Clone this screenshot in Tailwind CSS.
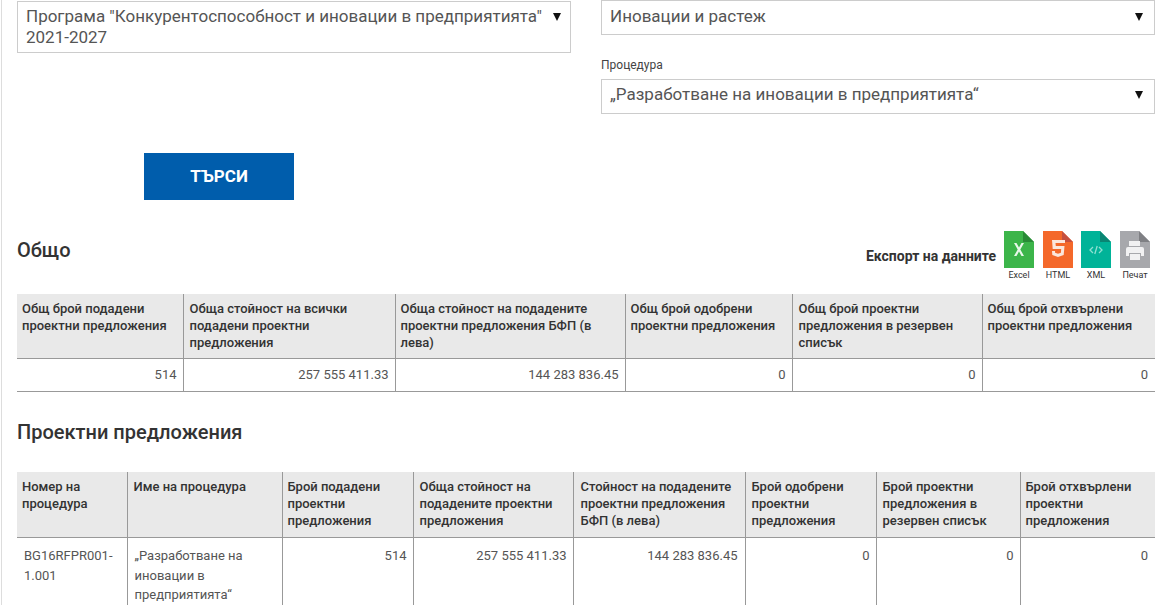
<!DOCTYPE html>
<html>
<head>
  <meta charset="utf-8">
  <title>Справка проектни предложения</title>
  <script src="https://cdn.jsdelivr.net/npm/@tailwindcss/browser@4"></script>
</head>
<body class="bg-white h-[605px] overflow-hidden font-['Roboto',sans-serif] text-[#555555]">
  <div class="ml-px h-[605px] border-l border-[#dddddd] pl-[15px] pr-[14px]">
    <!-- Filters -->
    <div class="flex h-[153px]">
      <div class="w-[554px] pt-px">
        <div class="relative h-[52px] border border-[#cccccc] pl-[8px] pr-[24px] pt-[4px] text-[17px] leading-[21px] text-[#555555]">
          Програма "Конкурентоспособност и иновации в предприятията" 2021-2027
          <svg class="absolute right-[9px] top-[11px] w-[8px] h-[8px]" viewBox="0 0 8 8"><polygon points="0,0 8,0 4,8" fill="#111111"/></svg>
        </div>
      </div>
      <div class="ml-[30px] w-[554px]">
        <div class="relative h-[35px] border border-[#cccccc] pl-[8px] pt-[5px] text-[17px] leading-[21px] text-[#555555]">
          Иновации и растеж
          <svg class="absolute right-[11px] top-[12px] w-[8px] h-[8px]" viewBox="0 0 8 8"><polygon points="0,0 8,0 4,8" fill="#111111"/></svg>
        </div>
        <div class="mt-[22px] h-[22px] text-[12px] leading-[16px] text-[#444444]">Процедура</div>
        <div class="relative h-[35px] border border-[#cccccc] pl-[8px] pt-[4px] text-[17px] leading-[21px] text-[#555555]">
          „Разработване на иновации в предприятията“
          <svg class="absolute right-[11px] top-[11px] w-[8px] h-[8px]" viewBox="0 0 8 8"><polygon points="0,0 8,0 4,8" fill="#111111"/></svg>
        </div>
      </div>
    </div>

    <button class="ml-[127px] block w-[150px] h-[47px] bg-[#005dac] text-white text-[17px] font-bold">ТЪРСИ</button>

    <!-- Summary heading + export -->
    <div class="flex justify-between h-[94px]">
      <h2 class="mt-[38px] text-[20px] leading-[24px] font-medium text-[#333333]">Общо</h2>
      <div class="flex items-start mt-[31px] mr-[6px]">
        <span class="mt-[17px] mr-[8px] text-[14px] leading-[16px] font-bold text-[#333333]">Експорт на данните</span>
        <div class="w-[30px] flex flex-col items-center">
          <svg class="w-[30px] h-[37px]" viewBox="0 0 30 37">
            <path d="M0 0H19L30 11V37H0Z" fill="#3cb54a"/><path d="M19 0L30 11H19Z" fill="#2a8a37"/>
            <path d="M10 12h2.500l2.500 4.500 2.500-4.500h2.500l-3.700 6.500 3.700 6.500h-2.500l-2.500-4.600-2.500 4.600h-2.500l3.700-6.500Z" fill="#e9f7ea"/>
          </svg>
          <span class="mt-[1px] text-[9px] leading-[12px] whitespace-nowrap text-[#333333]">Excel</span>
        </div>
        <div class="ml-[9px] w-[30px] flex flex-col items-center">
          <svg class="w-[30px] h-[37px]" viewBox="0 0 30 37">
            <path d="M0 0H19L30 11V37H0Z" fill="#f4682a"/><path d="M19 0L30 11H19Z" fill="#c5503f"/>
            <path d="M9 9h13v3h-9.500l.3 3H21.500l-.8 9-5.700 2-5.700-2-.3-4h3l.1 1.800 2.900 1 2.900-1 .3-3.800H9.700Z" fill="#fbe6dc"/>
          </svg>
          <span class="mt-[1px] text-[9px] leading-[12px] whitespace-nowrap text-[#333333]">HTML</span>
        </div>
        <div class="ml-[8px] w-[30px] flex flex-col items-center">
          <svg class="w-[30px] h-[37px]" viewBox="0 0 30 37">
            <path d="M0 0H19L30 11V37H0Z" fill="#00b398"/><path d="M19 0L30 11H19Z" fill="#0a8573"/>
            <path d="M12 16l-3 3 3 3M18 16l3 3-3 3M16.200 15l-2.400 8" fill="none" stroke="#8fe0d2" stroke-width="1.300"/>
          </svg>
          <span class="mt-[1px] text-[9px] leading-[12px] whitespace-nowrap text-[#333333]">XML</span>
        </div>
        <div class="ml-[9px] w-[30px] flex flex-col items-center">
          <svg class="w-[30px] h-[37px]" viewBox="0 0 30 37">
            <path d="M0 0H19L30 11V37H0Z" fill="#a7a8ac"/><path d="M19 0L30 11H19Z" fill="#7f8084"/>
            <path d="M9 10h11v5H9Z" fill="#f1f1f2"/>
            <path d="M8 16h14a2 2 0 0 1 2 2v7h-3v-3H9v3H6v-7a2 2 0 0 1 2-2Z" fill="#f1f1f2"/>
            <path d="M10 23h10v6H10Z" fill="#f1f1f2"/>
          </svg>
          <span class="mt-[1px] text-[9px] leading-[12px] whitespace-nowrap text-[#333333]">Печат</span>
        </div>
      </div>
    </div>

    <!-- Summary table -->
    <table class="w-[1138px] table-fixed border-collapse text-[13px] leading-[17px]">
      <colgroup>
        <col class="w-[166px]"><col class="w-[212px]"><col class="w-[230px]"><col class="w-[167px]"><col class="w-[190px]"><col class="w-[173px]">
      </colgroup>
      <thead>
        <tr class="h-[64px] bg-[#e9e9e9] border-b border-[#999999] text-[#333333] align-top text-left">
          <th class="pl-[5px] pr-[4px] pt-[6px] font-medium border-r border-[#999999]">Общ брой подадени проектни предложения</th>
          <th class="pl-[6px] pr-[4px] pt-[6px] font-medium border-r border-[#999999]">Обща стойност на всички подадени проектни предложения</th>
          <th class="pl-[5px] pr-[4px] pt-[6px] font-medium border-r border-[#999999]">Обща стойност на подадените проектни предложения БФП (в лева)</th>
          <th class="pl-[5px] pr-[4px] pt-[6px] font-medium border-r border-[#999999]">Общ брой одобрени проектни предложения</th>
          <th class="pl-[6px] pr-[4px] pt-[6px] font-medium border-r border-[#999999]">Общ брой проектни предложения в резервен списък</th>
          <th class="pl-[5px] pr-[4px] pt-[6px] font-medium">Общ брой отхвърлени проектни предложения</th>
        </tr>
      </thead>
      <tbody>
        <tr class="h-[33px] border-b border-[#999999] text-right">
          <td class="pr-[6px] border-r border-[#999999]">514</td>
          <td class="pr-[6px] border-r border-[#999999]">257 555 411.33</td>
          <td class="pr-[6px] border-r border-[#999999]">144 283 836.45</td>
          <td class="pr-[6px] border-r border-[#999999]">0</td>
          <td class="pr-[6px] border-r border-[#999999]">0</td>
          <td class="pr-[7px]">0</td>
        </tr>
      </tbody>
    </table>

    <h2 class="mt-[28px] h-[52px] text-[20px] leading-[24px] font-medium text-[#333333]">Проектни предложения</h2>

    <!-- Procedures table -->
    <table class="w-[1138px] table-fixed border-collapse text-[13px] leading-[17px]">
      <colgroup>
        <col class="w-[110px]"><col class="w-[155px]"><col class="w-[131px]"><col class="w-[160px]"><col class="w-[172px]"><col class="w-[131px]"><col class="w-[144px]"><col class="w-[135px]">
      </colgroup>
      <thead>
        <tr class="h-[66px] bg-[#e9e9e9] border-b border-[#999999] text-[#333333] align-top text-left">
          <th class="pl-[5px] pr-[4px] pt-[6px] font-medium border-r border-[#999999]">Номер на процедура</th>
          <th class="pl-[6px] pr-[4px] pt-[6px] font-medium border-r border-[#999999]">Име на процедура</th>
          <th class="pl-[5px] pr-[4px] pt-[6px] font-medium border-r border-[#999999]">Брой подадени проектни предложения</th>
          <th class="pl-[6px] pr-[4px] pt-[6px] font-medium border-r border-[#999999]">Обща стойност на подадените проектни предложения</th>
          <th class="pl-[7px] pr-[4px] pt-[6px] font-medium border-r border-[#999999]">Стойност на подадените проектни предложения БФП (в лева)</th>
          <th class="pl-[6px] pr-[4px] pt-[6px] font-medium border-r border-[#999999]">Брой одобрени проектни предложения</th>
          <th class="pl-[6px] pr-[4px] pt-[6px] font-medium border-r border-[#999999]">Брой проектни предложения в резервен списък</th>
          <th class="pl-[5px] pr-[4px] pt-[6px] font-medium">Брой отхвърлени проектни предложения</th>
        </tr>
      </thead>
      <tbody>
        <tr class="align-top">
          <td class="pl-[7px] pr-[4px] pt-[8px] pb-[4px] leading-[19.5px] border-r border-[#999999]">BG16RFPR001-1.001</td>
          <td class="pl-[7px] pr-[4px] pt-[8px] pb-[4px] leading-[19.5px] border-r border-[#999999]">„Разработване на иновации в предприятията“</td>
          <td class="pr-[6px] pt-[9px] leading-[17px] text-right border-r border-[#999999]">514</td>
          <td class="pr-[6px] pt-[9px] leading-[17px] text-right border-r border-[#999999]">257 555 411.33</td>
          <td class="pr-[7px] pt-[9px] leading-[17px] text-right border-r border-[#999999]">144 283 836.45</td>
          <td class="pr-[6px] pt-[9px] leading-[17px] text-right border-r border-[#999999]">0</td>
          <td class="pr-[6px] pt-[9px] leading-[17px] text-right border-r border-[#999999]">0</td>
          <td class="pr-[7px] pt-[9px] leading-[17px] text-right">0</td>
        </tr>
      </tbody>
    </table>
  </div>
</body>
</html>
